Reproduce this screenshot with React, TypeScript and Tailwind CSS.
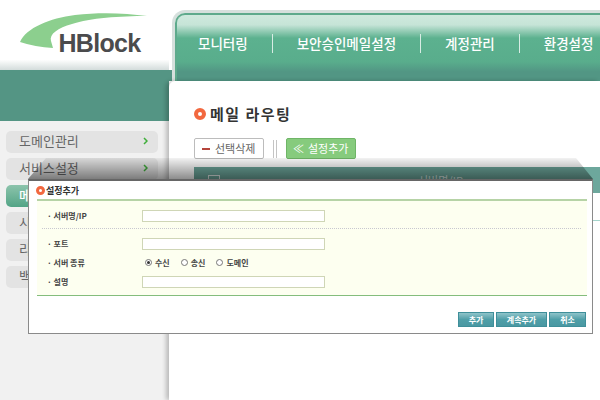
const kr = "font-['Noto_Sans_CJK_KR','Liberation_Sans',sans-serif]";

const navItems = ["모니터링", "보안승인메일설정", "계정관리", "환경설정"];
const sideItems = ["도메인관리", "서비스설정", "메일라우팅", "시스템설정", "리포트", "백업관리"];

const Dot = ({ small }: { small?: boolean }) => (
  <span
    className={
      small
        ? "block h-[9px] w-[9px] shrink-0 rounded-full border-[3px] border-[#f2683f] bg-white"
        : "block h-[12px] w-[12px] shrink-0 rounded-full border-[4px] border-[#f2683f] bg-white"
    }
  />
);

const Logo = () => (
  <svg width="169" height="60" viewBox="0 0 169 60">
    <path
      d="M20 42C26 28 50 18 75 15C100 12 125 13 147 16C120 16 90 18 72 24C58 28 49 34 51 41L53 48Q35 47 20 42Z"
      fill="#8ccf8e"
    />
    <text x="58.5" y="52" fontFamily="Liberation Sans" fontWeight="700" fontSize="25" letterSpacing="-0.7" fill="#4b4b4d">
      HBlock
    </text>
  </svg>
);

const Sidebar = () => (
  <div className="flex flex-1 flex-col gap-[5px] bg-[#f1f1f1] pl-[6px] pr-[11px] pt-[10px]">
    {sideItems.map((s, i) => (
      <div
        key={s}
        className={
          i === 2
            ? "flex h-[22px] items-center rounded-[5px] bg-gradient-to-b from-[#8cc4ac] to-[#52a486] pb-[2px] pl-[13px] text-[13px] font-medium text-white"
            : "flex h-[22px] items-center justify-between rounded-[5px] bg-[#e3e3e3] pb-[2px] pl-[13px] pr-[10px] text-[13px] text-[#666]"
        }
      >
        <span>{s}</span>
        {i < 2 && (
          <svg width="5" height="8" viewBox="0 0 5 8">
            <path d="M1 1L4 4L1 7" fill="none" stroke="#3fae3a" strokeWidth="1.5" />
          </svg>
        )}
      </div>
    ))}
  </div>
);

const Nav = () => (
  <div className="ml-[3px] mt-[10px] h-[71px] rounded-tl-[13px] border-l-[3px] border-t-[3px] border-[#d6e0dd]">
    <div className="flex h-full items-center rounded-tl-[10px] border-l-2 border-t-2 border-[#5eaa8c] bg-[linear-gradient(#cfe9de_0%,#c6e4d7_15%,#5cb18f_35%,#59ad8c_71%,#529684_86%,#529684_100%)] pb-[10px] pl-[21px]">
      {navItems.map((n, i) => (
        <div key={n} className="flex items-center">
          {i > 0 && <span className="mx-[24px] h-[19px] w-px bg-[#d8ece4]" />}
          <span className="text-[13.5px] font-medium text-white">{n}</span>
        </div>
      ))}
    </div>
  </div>
);

const Content = () => (
  <div className="flex-1 rounded-tl-[6px] bg-white pl-[25px] pt-[24px] shadow-[-3px_0_4px_rgba(0,0,0,0.22)]">
    <div className="flex h-[18px] items-center gap-[4px]">
      <Dot />
      <h1 className="whitespace-nowrap text-[15px] font-bold tracking-[1.5px] text-[#333]">메일 라우팅</h1>
    </div>
    <div className="mt-[15px] flex h-[21px] items-center">
      <button className="flex h-[21px] w-[70px] items-center gap-[5px] whitespace-nowrap rounded-[2px] border border-[#bcbcbc] pl-[7px] text-[11px] leading-none text-[#666]">
        <span className="h-[2px] w-[8px] bg-[#b5453c]" />
        선택삭제
      </button>
      <span className="mx-[9px] h-[18px] w-[4px] border-x border-[#c4c4c4]" />
      <button className="flex h-[21px] w-[70px] items-center gap-[4px] whitespace-nowrap rounded-[2px] border border-[#6fb567] bg-[#86cb7d] pl-[6px] text-[11px] leading-none text-white">
        <span>≪</span>
        설정추가
      </button>
    </div>
    <div className="mt-[8px] flex h-[26px] bg-[#6da79c] pl-[14px] pt-[8px] text-[11px] leading-none text-[#d8e8e4]">
      <span className="h-[12px] w-[12px] border border-[#dfe8e6]" />
      <span className="ml-[198px]">서버명/IP</span>
    </div>
    <div className="h-[28px] border-b border-[#a5d5cc]" />
  </div>
);

const Field = ({ label, children }: { label: string; children: React.ReactNode }) => (
  <div className="flex h-[11px] items-center">
    <span className="w-[105px] whitespace-nowrap pl-[10px] text-[8px] font-bold leading-none text-[#444]">· {label}</span>
    {children}
  </div>
);

const Input = () => <input className="h-[12px] w-[183px] border border-[#cfd6b6] bg-white" readOnly />;

const Radio = ({ label, on }: { label: string; on?: boolean }) => (
  <span className="flex items-center gap-[3px] whitespace-nowrap text-[8px] font-bold leading-none text-[#444]">
    <span className="flex h-[7px] w-[7px] items-center justify-center rounded-full border border-[#777] bg-white">
      {on && <span className="h-[3px] w-[3px] rounded-full bg-[#333]" />}
    </span>
    {label}
  </span>
);

const ModalButton = ({ label, w }: { label: string; w: string }) => (
  <button
    className={`flex h-[15px] items-center justify-center whitespace-nowrap border border-[#3f8f9a] bg-gradient-to-b from-[#8fc4ca] via-[#4f9fa8] to-[#4a98a2] text-[8px] font-bold leading-none text-white ${w}`}
  >
    {label}
  </button>
);

const Modal = () => (
  <div className="absolute left-[28px] top-[179px] h-[155px] w-[565px]">
    {/* shadow above the dialog */}
    <div className="absolute -top-[21px] left-0 h-[21px] w-full bg-gradient-to-b from-black/5 to-black/45 [clip-path:polygon(18px_0,548px_0,100%_100%,0_100%)]" />
    <div className="flex h-full flex-col border border-t-2 border-[#8a8a8a] border-t-[#666] bg-white pl-[8px] pr-[5px]">
      <div className="-ml-[1px] flex h-[18px] items-center gap-[1px]">
        <Dot small />
        <span className="whitespace-nowrap text-[9px] font-bold leading-none text-[#333]">설정추가</span>
      </div>
      <div className="h-[97px] border-b border-t-[2px] border-b-[#84bd7c] border-t-[#b6d3a6] bg-[#fdfff0] pt-[9px]">
        <Field label="서버명/IP">
          <Input />
        </Field>
        <div className="mb-[9px] ml-[5px] mr-[6px] mt-[7px] border-t border-dotted border-[#c8c8d0]" />
        <Field label="포트">
          <Input />
        </Field>
        <div className="mt-[8px]">
          <Field label="서버 종류">
            <div className="flex gap-[11px] pl-[3px]">
              <Radio label="수신" on />
              <Radio label="송신" />
              <Radio label="도메인" />
            </div>
          </Field>
        </div>
        <div className="mt-[8px]">
          <Field label="설명">
            <Input />
          </Field>
        </div>
      </div>
      <div className="mt-[16px] flex justify-end gap-[2px] pr-[1px]">
        <ModalButton label="추가" w="w-[36px]" />
        <ModalButton label="계속추가" w="w-[51px]" />
        <ModalButton label="취소" w="w-[37px]" />
      </div>
    </div>
  </div>
);

export default function App() {
  return (
    <div className={`relative flex h-[400px] w-[600px] overflow-hidden bg-white ${kr}`}>
      <div className="flex w-[169px] flex-col">
        <div className="h-[70px] bg-[linear-gradient(#fff_0%,#fff_85%,#d3dcdb_100%)]">
          <Logo />
        </div>
        <div className="h-[51px] bg-[#549584]" />
        <Sidebar />
      </div>
      <div className="flex flex-1 flex-col">
        <div className="h-[81px] bg-[linear-gradient(#fff_0,#fff_70px,#549584_70px)]">
          <Nav />
        </div>
        <Content />
      </div>
      <Modal />
    </div>
  );
}
